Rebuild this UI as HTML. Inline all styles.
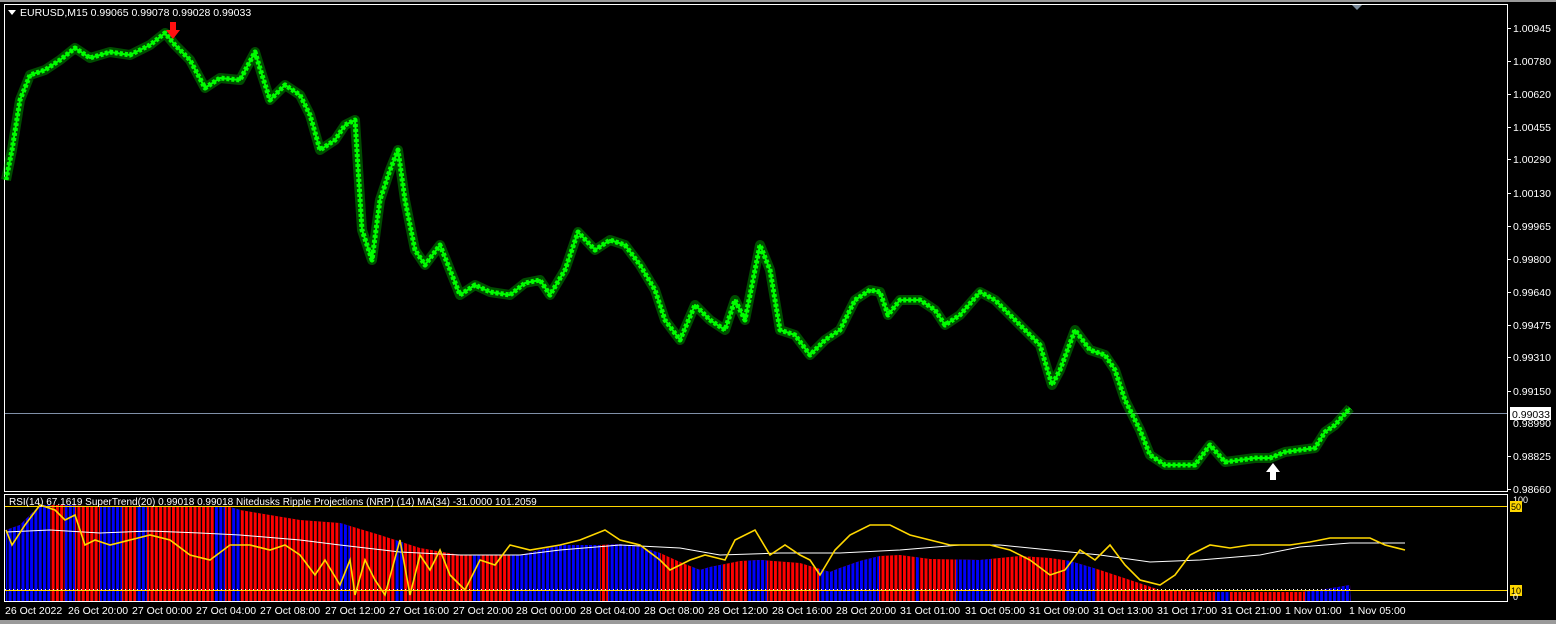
<!DOCTYPE html>
<html><head><style>
html,body{margin:0;padding:0;background:#000;width:1556px;height:624px;overflow:hidden}
svg{display:block}
text{font-family:"Liberation Sans",sans-serif;font-size:10.5px;fill:#fff}
</style></head><body>
<svg width="1556" height="624" viewBox="0 0 1556 624">
<defs>
<clipPath id="env"><polygon points="6,530 20,525 40,505 70,505 100,507 150,507 230,507 240,510 300,520 340,523 380,535 420,548 460,555 520,555 560,545 600,545 620,544 640,547 660,553 680,562 700,570 710,567 740,561 760,560 800,563 830,572 840,568 860,561 880,556 900,555 930,559 980,560 1020,556 1050,558 1070,561 1100,570 1130,580 1160,590 1200,592 1300,592 1320,590 1350,585 1351,601 6,601"/></clipPath>
<pattern id="gap" width="4.3" height="10" patternUnits="userSpaceOnUse"><rect x="3" y="0" width="1.3" height="10" fill="#000"/></pattern>
</defs>
<rect x="0" y="0" width="1556" height="2" fill="#9a9a9a"/>
<rect x="0" y="620" width="1556" height="4" fill="#9a9a9a"/>
<rect x="4.5" y="4.5" width="1503" height="487" fill="none" stroke="#fff"/>
<rect x="4.5" y="494.5" width="1503" height="107" fill="none" stroke="#fff"/>
<polygon points="1352,5 1362,5 1357,10" fill="#7a8a9a"/>
<line x1="5" y1="413.5" x2="1507" y2="413.5" stroke="#8090a8"/>
<g fill="none" stroke="#00ff00" stroke-linejoin="round">
<polyline stroke-width="10" stroke-opacity="0.3" points="6,180 12,150 20,100 30,75 45,70 60,60 75,48 90,58 110,52 130,55 150,45 165,33 175,45 190,60 205,88 220,78 240,80 255,52 262,75 270,100 285,85 300,95 310,115 320,150 335,140 345,125 355,120 362,230 372,260 380,200 390,170 398,150 405,200 415,250 425,265 440,245 450,270 460,295 475,285 490,292 510,295 525,283 540,280 550,295 565,270 578,232 595,250 610,240 625,245 640,265 655,290 665,320 680,340 695,305 710,320 725,330 735,300 745,320 760,245 770,270 780,330 795,335 810,355 825,340 840,330 855,300 870,290 880,292 888,315 900,300 920,300 935,310 945,325 960,315 980,292 995,300 1010,315 1025,330 1040,345 1052,385 1060,370 1075,330 1090,350 1105,355 1115,370 1125,400 1140,430 1150,455 1165,465 1180,465 1195,465 1210,445 1225,462 1240,460 1255,458 1270,458 1285,452 1300,450 1315,448 1325,432 1335,425 1350,408"/>
<polyline stroke-width="5" stroke-dasharray="3 2" points="6,180 12,150 20,100 30,75 45,70 60,60 75,48 90,58 110,52 130,55 150,45 165,33 175,45 190,60 205,88 220,78 240,80 255,52 262,75 270,100 285,85 300,95 310,115 320,150 335,140 345,125 355,120 362,230 372,260 380,200 390,170 398,150 405,200 415,250 425,265 440,245 450,270 460,295 475,285 490,292 510,295 525,283 540,280 550,295 565,270 578,232 595,250 610,240 625,245 640,265 655,290 665,320 680,340 695,305 710,320 725,330 735,300 745,320 760,245 770,270 780,330 795,335 810,355 825,340 840,330 855,300 870,290 880,292 888,315 900,300 920,300 935,310 945,325 960,315 980,292 995,300 1010,315 1025,330 1040,345 1052,385 1060,370 1075,330 1090,350 1105,355 1115,370 1125,400 1140,430 1150,455 1165,465 1180,465 1195,465 1210,445 1225,462 1240,460 1255,458 1270,458 1285,452 1300,450 1315,448 1325,432 1335,425 1350,408"/>
<polyline stroke-width="2" points="6,180 12,150 20,100 30,75 45,70 60,60 75,48 90,58 110,52 130,55 150,45 165,33 175,45 190,60 205,88 220,78 240,80 255,52 262,75 270,100 285,85 300,95 310,115 320,150 335,140 345,125 355,120 362,230 372,260 380,200 390,170 398,150 405,200 415,250 425,265 440,245 450,270 460,295 475,285 490,292 510,295 525,283 540,280 550,295 565,270 578,232 595,250 610,240 625,245 640,265 655,290 665,320 680,340 695,305 710,320 725,330 735,300 745,320 760,245 770,270 780,330 795,335 810,355 825,340 840,330 855,300 870,290 880,292 888,315 900,300 920,300 935,310 945,325 960,315 980,292 995,300 1010,315 1025,330 1040,345 1052,385 1060,370 1075,330 1090,350 1105,355 1115,370 1125,400 1140,430 1150,455 1165,465 1180,465 1195,465 1210,445 1225,462 1240,460 1255,458 1270,458 1285,452 1300,450 1315,448 1325,432 1335,425 1350,408"/>
</g>
<path d="M170,22 h6 v8 h4 l-7,9 l-7,-9 h4z" fill="#ff1010"/>
<path d="M1270,480 h6 v-8 h4 l-7,-9 l-7,9 h4z" fill="#fff"/>
<g clip-path="url(#env)">
<rect x="6" y="500" width="1345" height="101" fill="#ff0000"/>
<g fill="#0000ff">
<rect x="6" y="500" width="44" height="101"/><rect x="65" y="500" width="10" height="101"/>
<rect x="100" y="500" width="22" height="101"/><rect x="136" y="500" width="11" height="101"/>
<rect x="215" y="500" width="10" height="101"/><rect x="232" y="500" width="8" height="101"/>
<rect x="340" y="500" width="10" height="101"/><rect x="395" y="500" width="8" height="101"/>
<rect x="472" y="500" width="8" height="101"/><rect x="510" y="500" width="90" height="101"/>
<rect x="608" y="500" width="52" height="101"/><rect x="692" y="500" width="31" height="101"/>
<rect x="748" y="500" width="19" height="101"/><rect x="819" y="500" width="60" height="101"/>
<rect x="916" y="500" width="3" height="101"/><rect x="956" y="500" width="35" height="101"/>
<rect x="1065" y="500" width="30" height="101"/><rect x="1215" y="500" width="15" height="101"/>
<rect x="1305" y="500" width="46" height="101"/>
</g>
<rect x="6" y="500" width="1345" height="101" fill="url(#gap)"/>
</g>
<line x1="5" y1="506.5" x2="1507" y2="506.5" stroke="#ffd700"/>
<line x1="5" y1="590.5" x2="1507" y2="590.5" stroke="#ffd700"/>
<line x1="5" y1="589.5" x2="1350" y2="589.5" stroke="#fff" stroke-dasharray="1 3"/>
<polyline fill="none" stroke="#fff" stroke-width="1" points="6,532 50,530 100,533 150,531 200,533 240,535 300,540 340,545 400,552 460,555 520,555 560,550 620,545 680,548 720,555 780,553 840,553 900,550 960,545 1000,545 1050,550 1100,555 1150,562 1200,560 1260,555 1300,547 1350,543 1405,543"/>
<polyline fill="none" stroke="#ffd700" stroke-width="1.6" points="6,530 12,545 25,525 40,505 55,510 65,520 75,515 85,545 95,540 110,545 130,540 150,535 170,540 190,555 210,560 230,545 250,545 270,550 285,545 300,555 315,575 325,560 340,585 350,560 355,595 365,560 375,580 385,595 400,540 410,595 420,555 430,570 440,550 450,575 465,590 480,560 495,565 510,545 530,550 560,545 580,540 605,530 620,540 640,545 660,560 670,570 690,560 705,555 725,560 735,540 755,530 770,555 785,545 800,555 810,560 820,575 835,550 850,535 870,525 890,525 910,535 930,540 950,545 970,545 990,545 1010,550 1030,560 1050,575 1065,570 1080,550 1095,560 1110,545 1125,565 1140,580 1160,585 1175,575 1190,555 1210,545 1230,548 1250,545 1270,545 1290,545 1310,542 1330,538 1350,538 1370,538 1385,545 1405,550"/>
<text x="9" y="505" style="font-size:10px">RSI(14) 67.1619  SuperTrend(20) 0.99018 0.99018  Nitedusks Ripple Projections (NRP) (14) MA(34) -31.0000 101.2059</text>
<polygon points="8,10 16,10 12,15" fill="#fff"/>
<text x="20" y="16">EURUSD,M15  0.99065 0.99078 0.99028 0.99033</text>
<g>
<text x="1513" y="32">1.00945</text><text x="1513" y="65">1.00780</text><text x="1513" y="98">1.00620</text>
<text x="1513" y="131">1.00455</text><text x="1513" y="163">1.00290</text><text x="1513" y="197">1.00130</text>
<text x="1513" y="230">0.99965</text><text x="1513" y="263">0.99800</text><text x="1513" y="296">0.99640</text>
<text x="1513" y="329">0.99475</text><text x="1513" y="361">0.99310</text><text x="1513" y="395">0.99150</text>
<text x="1513" y="427">0.98990</text><text x="1513" y="460">0.98825</text><text x="1513" y="493">0.98660</text>
</g>
<g stroke="#fff"><line x1="1508" y1="28.5" x2="1511" y2="28.5"/><line x1="1508" y1="61.5" x2="1511" y2="61.5"/><line x1="1508" y1="94.5" x2="1511" y2="94.5"/><line x1="1508" y1="127.5" x2="1511" y2="127.5"/><line x1="1508" y1="159.5" x2="1511" y2="159.5"/><line x1="1508" y1="193.5" x2="1511" y2="193.5"/><line x1="1508" y1="226.5" x2="1511" y2="226.5"/><line x1="1508" y1="259.5" x2="1511" y2="259.5"/><line x1="1508" y1="292.5" x2="1511" y2="292.5"/><line x1="1508" y1="325.5" x2="1511" y2="325.5"/><line x1="1508" y1="357.5" x2="1511" y2="357.5"/><line x1="1508" y1="391.5" x2="1511" y2="391.5"/><line x1="1508" y1="456.5" x2="1511" y2="456.5"/><line x1="1508" y1="489.5" x2="1511" y2="489.5"/></g>
<rect x="1510" y="407" width="41" height="13" fill="#fff"/>
<text x="1512" y="418" style="fill:#000">0.99033</text>
<text x="1513" y="503" style="font-size:9px">100</text>
<rect x="1510" y="501" width="12" height="11" fill="#ffd700"/><text x="1511" y="510" style="fill:#000;font-size:9px">50</text>
<rect x="1510" y="585" width="12" height="11" fill="#ffd700"/><text x="1511" y="594" style="fill:#000;font-size:9px">10</text>
<text x="1513" y="600" style="font-size:9px">0</text>
<g>
<text x="5" y="614">26 Oct 2022</text><text x="68" y="614">26 Oct 20:00</text><text x="132" y="614">27 Oct 00:00</text>
<text x="196" y="614">27 Oct 04:00</text><text x="260" y="614">27 Oct 08:00</text><text x="325" y="614">27 Oct 12:00</text>
<text x="389" y="614">27 Oct 16:00</text><text x="453" y="614">27 Oct 20:00</text><text x="516" y="614">28 Oct 00:00</text>
<text x="580" y="614">28 Oct 04:00</text><text x="644" y="614">28 Oct 08:00</text><text x="708" y="614">28 Oct 12:00</text>
<text x="772" y="614">28 Oct 16:00</text><text x="836" y="614">28 Oct 20:00</text><text x="900" y="614">31 Oct 01:00</text>
<text x="965" y="614">31 Oct 05:00</text><text x="1029" y="614">31 Oct 09:00</text><text x="1093" y="614">31 Oct 13:00</text>
<text x="1157" y="614">31 Oct 17:00</text><text x="1221" y="614">31 Oct 21:00</text><text x="1285" y="614">1 Nov 01:00</text>
<text x="1349" y="614">1 Nov 05:00</text>
</g>
</svg>
</body></html>
